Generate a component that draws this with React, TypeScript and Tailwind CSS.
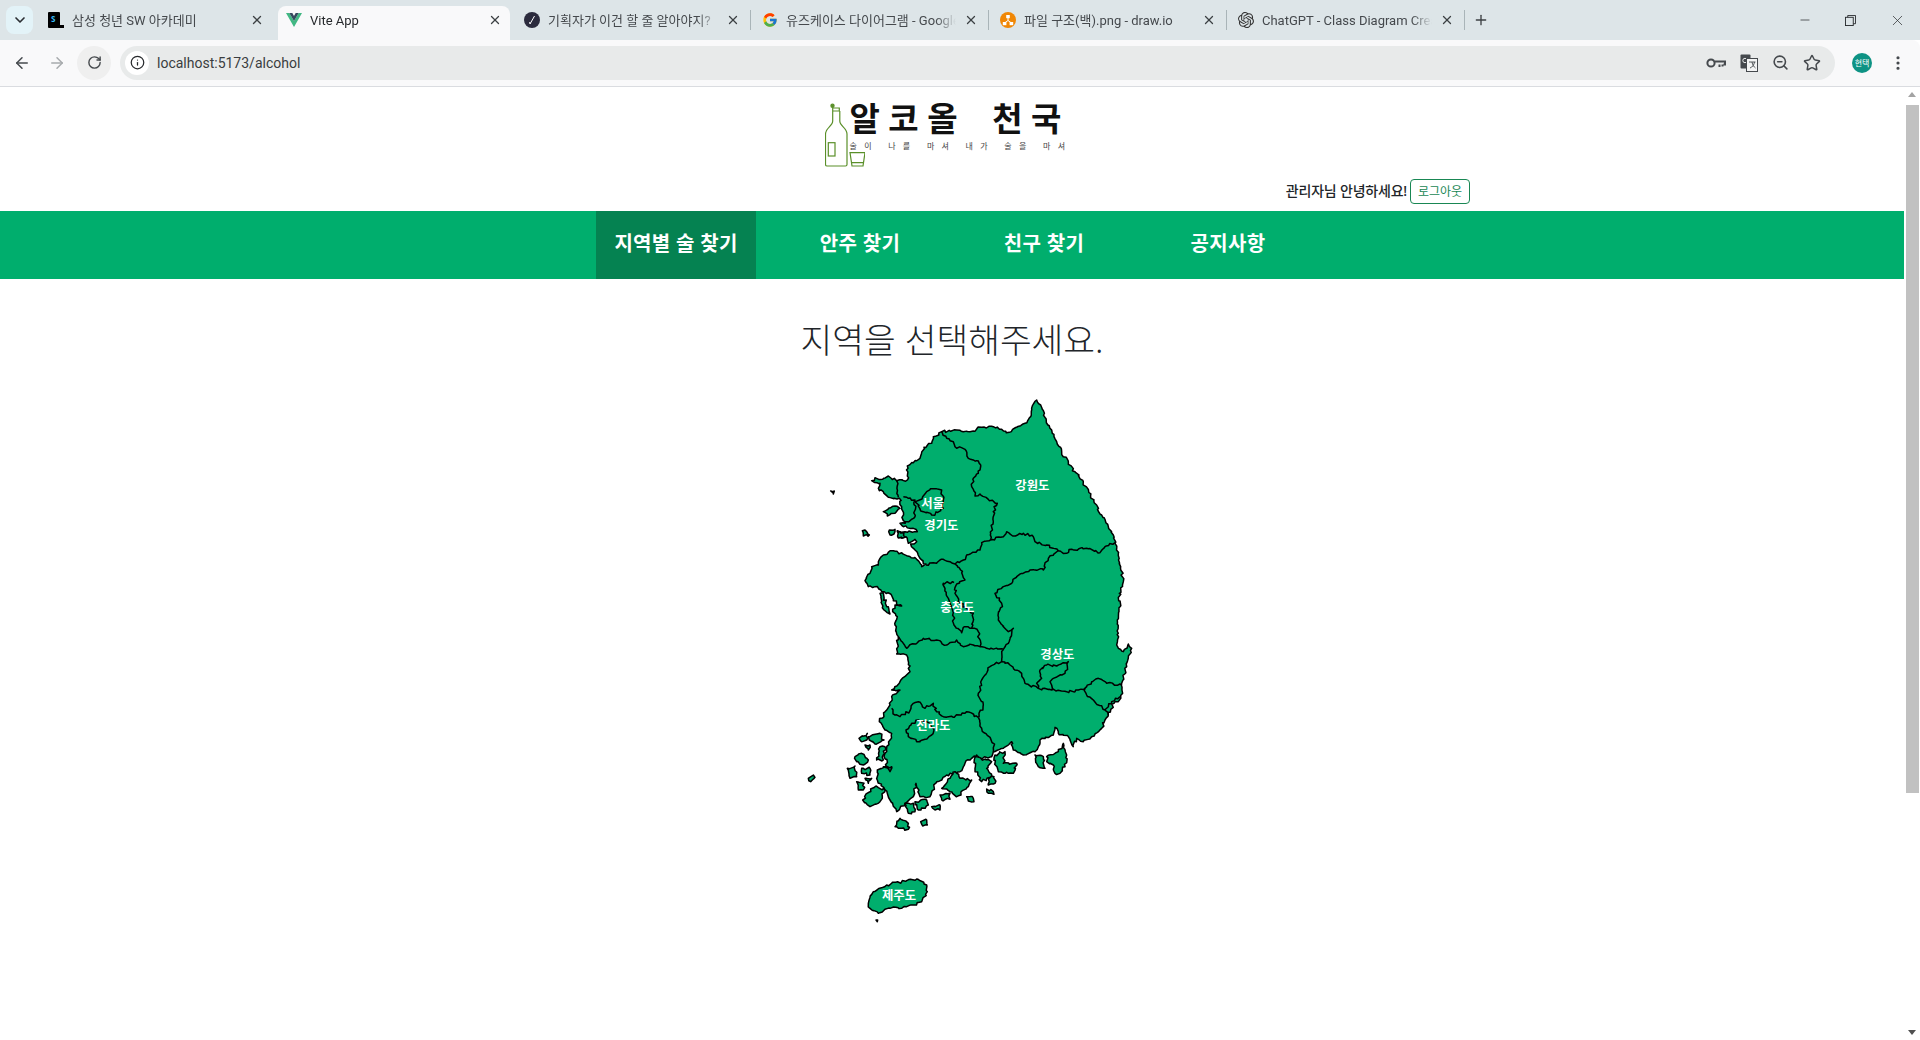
import type { ReactNode } from 'react';
import {
  ArrowLeft,
  ArrowRight,
  ChevronDown,
  Info,
  Minus,
  MoreVertical,
  Plus,
  RotateCw,
  Star,
  X,
  ZoomOut,
} from 'lucide-react';
import { FcGoogle } from 'react-icons/fc';
import { SiOpenai } from 'react-icons/si';

type Pt = [number, number];

// map is traced in 3x page pixels: z5 and z6 are the two crops it was read from
const z5 = (pts: Pt[]): Pt[] => pts.map(([x, y]) => [x + 30, y]);
const z6 = (pts: Pt[]): Pt[] => pts.map(([x, y]) => [x, y + 750]);

function noise(x: number, y: number) {
  const s = Math.sin(x * 12.9898 + y * 78.233) * 43758.5453;
  return s - Math.floor(s) - 0.5;
}

// subdivides a line and shakes it a little, so borders look like the jagged map image
function rough(pts: Pt[], close = false) {
  const list = close ? [...pts, pts[0]] : pts;
  let d = `M${list[0][0]} ${list[0][1]}`;
  for (let i = 1; i < list.length; i++) {
    const [ax, ay] = list[i - 1];
    const [bx, by] = list[i];
    const n = Math.max(1, Math.round(Math.hypot(bx - ax, by - ay) / 7));
    for (let k = 1; k <= n; k++) {
      const x = ax + ((bx - ax) * k) / n;
      const y = ay + ((by - ay) * k) / n;
      const edge = k === n;
      const ox = edge ? 0 : noise(x, y) * 8;
      const oy = edge ? 0 : noise(y, x) * 8;
      d += `L${(x + ox).toFixed(1)} ${(y + oy).toFixed(1)}`;
    }
  }
  return close ? d + 'Z' : d;
}

const mainland: Pt[] = [
  ...z5([
    [425, 125], [470, 120], [510, 125], [545, 112], [580, 110], [605, 118], [628, 127], [650, 112], [675, 100],
    [692, 80], [698, 45], [710, 30], [722, 45], [737, 85], [755, 120], [770, 155], [785, 185], [805, 215],
    [825, 245], [850, 275], [872, 315], [890, 345], [905, 375], [925, 410], [940, 435], [945, 460], [955, 490],
    [962, 530], [970, 575], [958, 610], [960, 650], [952, 690], [955, 730], [950, 765],
  ]),
  ...z6([
    [985, 25], [1000, 35], [1015, 12], [1025, 25], [1010, 80], [995, 130], [998, 160], [985, 185], [972, 190],
    [955, 225], [945, 240], [935, 265], [905, 290], [880, 305], [860, 295], [850, 320], [835, 290], [805, 280],
    [795, 262], [790, 285], [750, 300], [745, 320], [735, 335], [700, 345], [670, 330], [665, 305], [640, 325],
    [610, 335], [605, 350], [570, 355], [560, 345], [545, 355], [525, 370], [510, 395], [470, 405], [440, 425],
    [420, 470], [390, 470], [378, 430], [370, 470], [345, 490], [320, 515], [300, 480], [285, 450], [262, 420],
    [262, 390], [290, 380], [285, 340], [300, 300], [305, 280], [285, 270], [268, 245], [290, 210], [300, 195],
    [305, 170], [330, 150], [305, 150], [330, 125], [360, 95], [350, 45], [320, 42],
  ]),
  ...z5([
    [295, 740], [285, 705], [292, 680], [278, 665], [285, 645], [305, 648], [280, 632], [272, 612], [245, 605],
    [225, 590], [205, 590], [195, 572], [210, 550], [215, 530], [235, 525], [240, 505], [250, 495], [280, 482],
    [320, 497], [350, 508], [365, 530], [378, 522], [360, 505], [345, 480], [332, 462], [350, 455], [345, 448],
    [325, 460], [318, 440], [295, 442], [292, 422], [315, 425], [352, 425], [340, 415], [310, 410], [300, 400],
    [325, 395], [310, 392], [305, 350], [298, 325], [265, 322], [250, 305], [235, 295], [240, 280], [215, 272],
    [225, 263], [248, 268], [265, 258], [290, 272], [322, 270], [322, 228], [360, 205], [372, 172], [395, 160],
    [400, 140],
  ]),
];

const borders: Pt[][] = [
  z5([[425, 125], [440, 145], [460, 155], [465, 170], [495, 178], [505, 205], [530, 212], [542, 225], [535, 250], [520, 265], [515, 290], [525, 318], [540, 312], [565, 328], [592, 340], [580, 365], [580, 395], [572, 430], [572, 450]]),
  z5([[572, 450], [610, 440], [620, 425], [638, 438], [670, 430], [700, 440], [705, 455], [740, 465], [775, 482], [800, 490], [815, 478], [860, 475], [900, 488], [915, 470], [945, 458]]),
  z5([[572, 450], [545, 458], [540, 480], [500, 495], [490, 510], [465, 522]]),
  z5([[378, 525], [400, 518], [430, 508], [450, 515], [465, 522]]),
  z5([[465, 522], [482, 540], [495, 570], [470, 582], [465, 610], [475, 635], [520, 670], [515, 715], [490, 712], [485, 728], [462, 705], [460, 668], [445, 625], [435, 595], [430, 580], [462, 578]]),
  z5([[515, 715], [535, 725], [540, 770], [560, 775], [610, 778], [625, 760], [640, 715], [625, 725], [595, 690], [605, 640], [585, 610], [610, 590], [635, 580], [650, 560], [690, 540], [730, 540], [745, 505], [775, 482]]),
  z5([[295, 740], [320, 775], [370, 745], [410, 750], [440, 765], [470, 750], [490, 770], [520, 765], [540, 770]]),
  z5([[290, 272], [295, 322]]),
  z5([[310, 320], [345, 330], [345, 380], [325, 395]]),
  z5([[345, 335], [368, 320], [380, 305], [402, 296], [425, 300], [430, 330], [430, 355], [395, 375], [370, 365], [345, 335]]),
  z6([[640, 30], [635, 65], [600, 80], [575, 120], [565, 160], [580, 195], [565, 232]]),
  z6([[305, 205], [315, 225], [330, 230], [360, 212], [370, 190], [385, 185], [405, 205], [430, 190], [440, 215], [460, 230], [490, 232], [530, 215], [565, 232]]),
  z6([[565, 232], [575, 265], [610, 310], [610, 335]]),
  z6([[635, 65], [660, 75], [695, 100], [705, 130], [745, 145], [785, 150], [830, 155], [855, 155], [885, 145], [890, 165], [945, 210], [955, 225]]),
  z6([[745, 145], [740, 130], [755, 115], [750, 90], [770, 75], [800, 78], [835, 65], [825, 100], [790, 115], [780, 125], [785, 150]]),
  z6([[885, 145], [905, 125], [925, 115], [950, 130], [995, 135]]),
  z6([[945, 210], [965, 185], [990, 170]]),
];

const innerHoles: Pt[][] = [
  z6([[348, 270], [365, 250], [385, 240], [410, 245], [430, 265], [425, 285], [405, 298], [380, 305], [355, 290]]),
];

const islands: Pt[][] = [
  z5([[92, 303], [103, 303], [100, 312]]),
  z5([[187, 422], [195, 420], [208, 435], [190, 438]]),
  z5([[250, 365], [285, 348], [300, 355], [285, 370], [262, 378]]),
  z5([[268, 420], [285, 418], [282, 432], [270, 435]]),
  z5([[292, 425], [312, 428], [315, 442], [295, 444]]),
  z5([[240, 610], [250, 608], [256, 640], [270, 672], [252, 660]]),
  z6([[55, 415], [70, 405], [75, 412], [62, 425]]),
  z6([[207, 295], [232, 280], [230, 300], [215, 305]]),
  z6([[235, 290], [270, 280], [282, 300], [255, 312], [238, 300]]),
  z6([[225, 315], [240, 315], [235, 330]]),
  z6([[195, 350], [215, 340], [235, 360], [220, 375], [200, 365]]),
  z6([[172, 385], [195, 378], [200, 410], [180, 415]]),
  z6([[215, 385], [240, 385], [240, 405], [215, 400]]),
  z6([[225, 415], [245, 415], [235, 430]]),
  z6([[200, 425], [222, 430], [220, 450], [205, 450]]),
  z6([[270, 320], [285, 320], [280, 360], [260, 360]]),
  z6([[280, 380], [305, 380], [300, 395]]),
  z6([[218, 480], [255, 440], [285, 450], [270, 485], [240, 500]]),
  z6([[345, 490], [370, 490], [375, 515], [355, 520]]),
  z6([[375, 485], [410, 480], [415, 495], [385, 510]]),
  z6([[425, 500], [450, 495], [450, 510], [435, 510]]),
  z6([[315, 560], [330, 535], [355, 550], [355, 568], [335, 565]]),
  z6([[392, 545], [410, 540], [412, 555], [398, 558]]),
  z6([[455, 445], [480, 415], [495, 395], [510, 415], [545, 420], [535, 440], [500, 470], [480, 455]]),
  z6([[450, 465], [480, 460], [480, 478], [455, 480]]),
  z6([[530, 470], [550, 475], [552, 485], [535, 483]]),
  z6([[555, 352], [605, 365], [590, 385], [605, 410], [575, 425], [555, 385]]),
  z6([[595, 415], [612, 410], [615, 430], [595, 435]]),
  z6([[590, 447], [610, 455], [612, 463], [595, 460]]),
  z6([[615, 345], [645, 335], [640, 370], [680, 370], [670, 400], [645, 400], [625, 395], [615, 370]]),
  z6([[770, 350], [805, 335], [820, 310], [830, 345], [825, 380], [810, 400], [795, 400], [790, 375], [770, 365]]),
  z6([[735, 345], [760, 350], [765, 385], [745, 380]]),
  z6([[235, 790], [250, 755], [290, 735], [350, 722], [380, 717], [410, 735], [412, 755], [395, 785], [350, 800], [300, 805], [265, 820], [240, 805]]),
  z6([[258, 840], [263, 840], [262, 845]]),
];

const labels: { name: string; x: number; y: number }[] = [
  { name: '강원도', x: 727, y: 285 },
  { name: '서울', x: 428, y: 340 },
  { name: '경기도', x: 454, y: 406 },
  { name: '충청도', x: 502, y: 652 },
  { name: '경상도', x: 802, y: 794 },
  { name: '전라도', x: 430, y: 1005 },
  { name: '제주도', x: 327, y: 1517 },
];

function KoreaMap() {
  return (
    <svg viewBox="-108 0 1188 1620" className="w-[396px] h-[540px] mt-[26px] shrink-0">
      <g fill="#00ae6d" stroke="#000" strokeWidth="4.5" strokeLinejoin="round">
        <path d={rough(mainland, true)} />
        {islands.map((pts, i) => (
          <path key={i} d={rough(pts, true)} />
        ))}
      </g>
      <g fill="none" stroke="#000" strokeWidth="4.5" strokeLinejoin="round">
        {borders.map((pts, i) => (
          <path key={i} d={rough(pts)} />
        ))}
        {innerHoles.map((pts, i) => (
          <path key={i} d={rough(pts, true)} />
        ))}
      </g>
      <g fill="#fff" fontSize="37" fontWeight="700" textAnchor="middle" dominantBaseline="central">
        {labels.map((l) => (
          <text key={l.name} x={l.x} y={l.y}>
            {l.name}
          </text>
        ))}
      </g>
    </svg>
  );
}

function VueIcon() {
  return (
    <svg viewBox="0 0 24 21" className="w-4 h-4">
      <path d="M0 0h5l7 12L19 0h5L12 21z" fill="#41b883" />
      <path d="M5 0h4.5L12 4.5 14.5 0H19l-7 12z" fill="#34495e" />
    </svg>
  );
}

function SsafyIcon() {
  return (
    <div className="relative w-4 h-4">
      <div className="w-[12px] h-4 bg-black rounded-[1px]" />
      <div className="absolute right-0 bottom-0 w-[6px] h-[3px] bg-black" />
      <span className="absolute left-[3px] top-0 text-[8px] leading-[14px] font-bold text-[#38bdf8]">S</span>
    </div>
  );
}

function NotionLikeIcon() {
  return (
    <svg viewBox="0 0 16 16" className="w-4 h-4">
      <circle cx="8" cy="8" r="8" fill="#2b2b3d" />
      <path d="M6 12 10.5 4M6 12l-.3-2" stroke="#fff" strokeWidth="1" fill="none" />
    </svg>
  );
}

function DrawioIcon() {
  return (
    <svg viewBox="0 0 16 16" className="w-4 h-4">
      <circle cx="8" cy="8" r="8" fill="#f08705" />
      <path d="M8 6v2.5M8 8.5 4.5 11M8 8.5l3.5 2.5" stroke="#fff" strokeWidth="1" />
      <rect x="6.2" y="3" width="3.6" height="3.2" fill="#fff" />
      <rect x="2.8" y="10" width="3.6" height="3.2" fill="#fff" />
      <rect x="9.6" y="10" width="3.6" height="3.2" fill="#fff" />
    </svg>
  );
}

function PasswordKeyIcon() {
  return (
    <svg viewBox="0 0 20 12" className="w-5 h-3" fill="none" stroke="#45494d" strokeWidth="2">
      <circle cx="5" cy="6" r="3.6" />
      <path d="M9 4.5h10v3h-1.5M13.5 7.5V10M16.5 7.5V9.5" />
    </svg>
  );
}

function TranslateIcon() {
  return (
    <svg viewBox="0 0 18 18" className="w-[18px] h-[18px]">
      <rect x="0.5" y="0.5" width="10" height="14" rx="1" fill="#45494d" />
      <circle cx="5" cy="6.5" r="2.2" fill="none" stroke="#e8eaea" strokeWidth="1" />
      <rect x="6.5" y="4.5" width="11" height="13" fill="#f3f4f4" stroke="#45494d" strokeWidth="1" />
      <path d="M9 8h6.5M12 8c.5 3 2 5 3.5 6M14.5 8c-.5 3-2 5-4.5 6" stroke="#45494d" strokeWidth="0.9" fill="none" />
    </svg>
  );
}

const tabs: { title: string; icon: ReactNode; active?: boolean; sep?: boolean }[] = [
  { title: '삼성 청년 SW 아카데미', icon: <SsafyIcon /> },
  { title: 'Vite App', icon: <VueIcon />, active: true },
  { title: '기획자가 이건 할 줄 알아야지?', icon: <NotionLikeIcon /> },
  { title: '유즈케이스 다이어그램 - Google', icon: <FcGoogle className="w-4 h-4" />, sep: true },
  { title: '파일 구조(백).png - draw.io', icon: <DrawioIcon />, sep: true },
  { title: 'ChatGPT - Class Diagram Creation', icon: <SiOpenai className="w-4 h-4 text-[#333]" />, sep: true },
];

function TabBar() {
  return (
    <div className="flex h-10 pt-[6px] pl-[6px] bg-[#dde5e8] shrink-0">
      <div className="w-[27px] h-7 mr-[7px] rounded-lg bg-[#e3f3f8] flex items-center justify-center">
        <ChevronDown className="w-4 h-4 text-[#2b2f33]" strokeWidth={2.5} />
      </div>
      {tabs.map((t) => (
        <div
          key={t.title}
          className={`relative w-[232px] mr-[6px] flex items-center pl-2 pr-2 pb-[6px] rounded-t-lg ${t.active ? 'bg-[#f9f9fa]' : ''}`}
        >
          <div className="w-4 h-4 shrink-0">{t.icon}</div>
          <span
            className={`ml-2 pt-px flex-1 whitespace-nowrap overflow-hidden font-['Roboto','Noto_Sans_CJK_KR',sans-serif] text-[13px] [mask-image:linear-gradient(to_right,black_88%,transparent)] ${t.active ? 'text-[#26292c]' : 'text-[#45494d]'}`}
          >
            {t.title}
          </span>
          <X className="w-3.5 h-3.5 ml-2 shrink-0 text-[#3c4043]" strokeWidth={2.25} />
          {t.sep && <div className="absolute -left-[4px] top-[4px] w-px h-5 bg-[#a9b4b8]" />}
        </div>
      ))}
      <div className="relative h-7 flex items-center">
        <div className="absolute -left-[4px] top-[4px] w-px h-5 bg-[#a9b4b8]" />
        <Plus className="w-4 h-4 ml-[5px] text-[#3c4043]" strokeWidth={2} />
      </div>
      <div className="flex-1" />
      <div className="h-7 flex items-center text-[#26292c] pr-[14px] gap-[33px]">
        <Minus className="w-[14px] h-[14px]" strokeWidth={1.25} />
        <svg viewBox="0 0 12 12" className="w-[11px] h-[11px]" fill="none" stroke="currentColor">
          <rect x="0.5" y="2.5" width="8.5" height="9" />
          <path d="M3 2.5V.5h8.5v9H9" />
        </svg>
        <X className="w-[17px] h-[17px]" strokeWidth={1} />
      </div>
    </div>
  );
}

function AddressBar() {
  return (
    <div className="flex items-center h-[47px] pb-px bg-[#f9f9fa] border-b border-[#dadce0] rounded-tr-lg shrink-0">
      <ArrowLeft className="w-[18px] h-[18px] ml-[13px] text-[#45494d]" strokeWidth={2} />
      <ArrowRight className="w-[18px] h-[18px] ml-[17px] text-[#a7aaad]" strokeWidth={2} />
      <div className="w-[34px] h-[34px] ml-[11px] rounded-full bg-[#efefef] flex items-center justify-center">
        <RotateCw className="w-[15px] h-[15px] text-[#45494d]" strokeWidth={2.25} />
      </div>
      <div className="w-[1715px] h-[34px] ml-[9px] rounded-full bg-[#e8eaea] flex items-center pl-[5px] pr-[14px]">
        <div className="w-6 h-6 rounded-full bg-white flex items-center justify-center">
          <Info className="w-[15px] h-[15px] text-[#26292c]" strokeWidth={2} />
        </div>
        <span className="ml-2 pt-px text-[14px] font-['Roboto',sans-serif] text-[#3a3d40]">localhost:5173/alcohol</span>
        <div className="flex-1" />
        <div className="flex items-center gap-[14px] text-[#45494d]">
          <PasswordKeyIcon />
          <TranslateIcon />
          <ZoomOut className="w-[17px] h-[17px]" strokeWidth={2.25} />
          <Star className="w-[18px] h-[18px]" strokeWidth={2} />
        </div>
      </div>
      <div className="w-5 h-5 ml-[17px] rounded-full bg-[#0e9384] text-white text-[8px] leading-5 text-center">
        현택
      </div>
      <MoreVertical className="w-[18px] h-[18px] ml-[17px] text-[#45494d]" strokeWidth={2.25} />
    </div>
  );
}

function Logo() {
  return (
    <div className="flex justify-center pt-4 pr-[5px]">
      <svg viewBox="0 0 40 65" className="w-10 h-[65px] -mr-[15px] shrink-0" fill="none" stroke="#5a8f29" strokeWidth="1.2">
        <circle cx="7.5" cy="2.8" r="1.6" fill="#5a8f29" />
        <path d="M7.7 5h6.6v3H7.7zM7.7 8v10c0 5-7.2 7-7.2 13v30.5c0 1 .5 1.5 1.5 1.5h18.5c1 0 1.5-.5 1.5-1.5V31c0-6-7.2-8-7.2-13V8" />
        <rect x="3.3" y="39.7" width="6.7" height="13.3" />
        <path d="M25 49.7h15l-2 13.3H27zM26.5 59.7h12" />
      </svg>
      <div className="text-[#111] w-[225px] -mt-[4px]">
        <div className="text-[33px] leading-[40px] font-bold tracking-[8.5px] [word-spacing:9px] whitespace-nowrap">
          알코올 천국
        </div>
        <div className="text-[8px] leading-[10px] mt-[2px] tracking-[7.3px] text-[#444] whitespace-nowrap">
          술이 나를 마셔 내가 술을 마셔
        </div>
      </div>
    </div>
  );
}

const navItems = ['지역별 술 찾기', '안주 찾기', '친구 찾기', '공지사항'];

function Nav() {
  return (
    <nav className="h-[68px] bg-[#00ae6d] flex pl-[596px] gap-6 shrink-0">
      {navItems.map((item, i) => (
        <a
          key={item}
          className={`w-40 flex items-center justify-center text-[20px] tracking-[0.3px] font-bold text-white pb-[2px] ${i === 0 ? 'bg-[#058251]' : ''}`}
        >
          {item}
        </a>
      ))}
    </nav>
  );
}

function Scrollbar() {
  return (
    <div className="w-4 shrink-0 bg-white flex flex-col items-center">
      <div className="mt-[5px] w-0 h-0 border-x-[4px] border-x-transparent border-b-[5px] border-b-[#a3a3a3]" />
      <div className="w-[13px] h-[688px] mt-[8px] bg-[#c1c1c1]" />
      <div className="flex-1" />
      <div className="mb-[5px] w-0 h-0 border-x-[4px] border-x-transparent border-t-[5px] border-t-[#505050]" />
    </div>
  );
}

export default function App() {
  return (
    <div className="relative h-[1040px] overflow-hidden flex flex-col bg-white font-['Noto_Sans','Noto_Sans_CJK_KR',sans-serif]">
      <TabBar />
      <AddressBar />
      <div className="flex flex-1 min-h-0">
        <div className="flex-1 min-w-0 flex flex-col overflow-hidden">
          <header className="h-[124px] shrink-0 flex flex-col">
            <Logo />
            <div className="flex-1" />
            <div className="flex justify-end items-center pr-[434px] pb-[7px] gap-[3px]">
              <span className="text-[14px] tracking-[-0.2px] font-medium text-[#212529] pb-[2px]">관리자님 안녕하세요!</span>
              <button className="w-[60px] h-[25px] border border-[#198754] rounded-[4px] text-[12px] text-[#198754]">
                로그아웃
              </button>
            </div>
          </header>
          <Nav />
          <main className="flex flex-col items-center pt-[37px]">
            <h2 className="text-[34.5px] leading-[48px] font-light text-[#212529]">지역을 선택해주세요.</h2>
            <KoreaMap />
          </main>
        </div>
        <Scrollbar />
      </div>
    </div>
  );
}
